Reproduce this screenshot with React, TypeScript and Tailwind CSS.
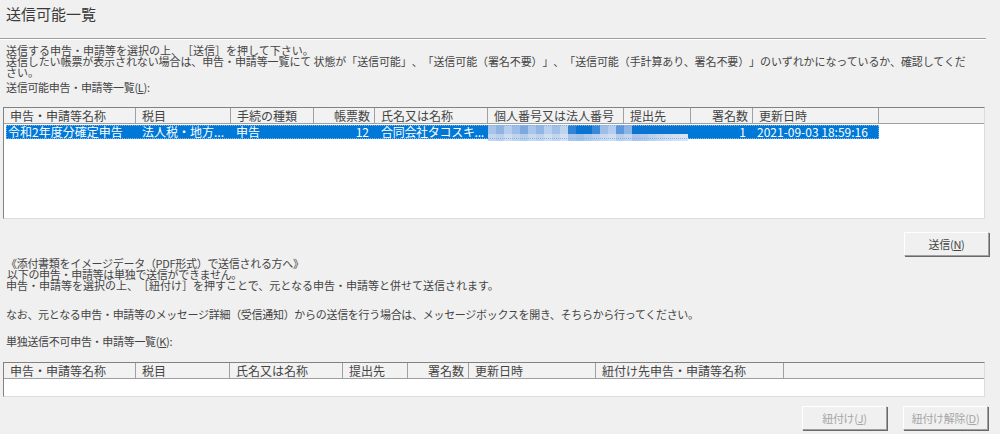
import React from 'react';

type Col = { label: string; w: string; right?: boolean };

const sendCols: Col[] = [
  { label: '申告・申請等名称', w: 'w-[132px]' },
  { label: '税目', w: 'w-[95px]' },
  { label: '手続の種類', w: 'w-[83px]' },
  { label: '帳票数', w: 'w-[61px]', right: true },
  { label: '氏名又は名称', w: 'w-[113px]' },
  { label: '個人番号又は法人番号', w: 'w-[136px]' },
  { label: '提出先', w: 'w-[67px]' },
  { label: '署名数', w: 'w-[62px]', right: true },
  { label: '更新日時', w: 'w-[126px]' },
];

const linkCols: Col[] = [
  { label: '申告・申請等名称', w: 'w-[132px]' },
  { label: '税目', w: 'w-[94px]' },
  { label: '氏名又は名称', w: 'w-[113px]' },
  { label: '提出先', w: 'w-[65px]' },
  { label: '署名数', w: 'w-[61px]', right: true },
  { label: '更新日時', w: 'w-[127px]' },
  { label: '紐付け先申告・申請等名称', w: 'w-[188px]' },
];

// pixelated (masked) number cells
const mosaic: [string, string][] = [
  ['bg-[#a7c3e7]', 'bg-[#c4d6ef]'],
  ['bg-[#8fb4e2]', 'bg-[#bcd0ec]'],
  ['bg-[#b5cdec]', 'bg-[#cddcf0]'],
  ['bg-[#9dbde6]', 'bg-[#c0d4ee]'],
  ['bg-[#7aa8df]', 'bg-[#b6cdec]'],
  ['bg-[#a9c5e9]', 'bg-[#c8d9ef]'],
  ['bg-[#92b6e3]', 'bg-[#bfd3ed]'],
  ['bg-[#b9cfed]', 'bg-[#d0def1]'],
  ['bg-[#a2c0e7]', 'bg-[#c3d6ee]'],
  ['bg-[#c0d4ee]', 'bg-[#d3e0f2]'],
  ['bg-[#2f84d8]', 'bg-[#a9c6ea]'],
  ['bg-[#0a74d2]', 'bg-[#a4c2e8]'],
  ['bg-[#0a74d2]', 'bg-[#b1caeb]'],
  ['bg-[#3a88d9]', 'bg-[#bcd1ed]'],
  ['bg-[#9fbee6]', 'bg-[#c9daf0]'],
  ['bg-[#b4cded]', 'bg-[#d0def1]'],
  ['bg-[#5c99dc]', 'bg-[#b8cfec]'],
  ['bg-[#8db5e4]', 'bg-[#c4d6ef]'],
  ['bg-[#0a74d2]', 'bg-[#aac5e9]'],
  ['bg-[#0a74d2]', 'bg-[#b3cbeb]'],
  ['bg-[#0a74d2]', 'bg-[#bdd2ed]'],
  ['bg-[#0a74d2]', 'bg-[#c6d8ef]'],
  ['bg-[#0a74d2]', 'bg-[#cddcf0]'],
  ['bg-[#0a74d2]', 'bg-[#d2e0f2]'],
  ['bg-[#0a74d2]', 'bg-[#d8e3f3]'],
];

function Header({ cols }: { cols: Col[] }) {
  return (
    <div className="flex h-[16px] shrink-0 bg-[#f2f2f2] border-b border-[#a0a0a0] text-[12px] leading-[15px] text-[#444]">
      {cols.map((c) => (
        <div
          key={c.label}
          className={`${c.w} shrink-0 border-r border-[#a0a0a0] overflow-hidden whitespace-nowrap ${c.right ? 'text-right pr-[4px]' : 'pl-[6px]'}`}
        >
          {c.label}
        </div>
      ))}
      <div className="flex-1" />
    </div>
  );
}

function Btn({ children, disabled }: { children: React.ReactNode; disabled?: boolean }) {
  return (
    <button
      className={`w-[85px] h-[24px] bg-[#f0f0f0] border border-t-white border-l-white border-r-[#a0a0a0] border-b-[#a0a0a0] shadow-[1px_1px_0_0_#696969] text-[11px] leading-[14px] tracking-[-0.3px] ${disabled ? 'text-[#a6a6a6]' : 'text-[#444]'}`}
    >
      {children}
    </button>
  );
}

export default function App() {
  return (
    <div className="w-[1000px] h-[434px] overflow-hidden bg-[#f0f0f0] text-[#444] text-[11px] [text-spacing-trim:space-all] font-['Noto_Sans_CJK_JP','Noto_Sans',sans-serif] flex flex-col">
      <div className="mt-[5px] ml-[6px] h-[18px] text-[15px] leading-[18px] text-[#3a3a3a]">送信可能一覧</div>
      <div className="mt-[15px] w-[986px] h-[2px] border-t border-t-[#a0a0a0] border-b border-b-white" />

      {/* instructions */}
      <div className="mt-[5px] ml-[6px] leading-[11px] whitespace-nowrap">
        <div>送信する申告・申請等を選択の上、［送信］を押して下さい。</div>
        <div className="tracking-[-0.1px]">送信したい帳票が表示されない場合は、申告・申請等一覧にて 状態が「送信可能」、「送信可能（署名不要）」、「送信可能（手計算あり、署名不要）」のいずれかになっているか、確認してくだ</div>
        <div>さい。</div>
      </div>
      <div className="mt-[3px] ml-[6px] leading-[12px] tracking-[-0.3px]">
        送信可能申告・申請等一覧(<span className="underline">L</span>):
      </div>

      {/* send list */}
      <div className="mt-[14px] ml-[3px] w-[982px] h-[112px] shrink-0 flex flex-col border border-t-[#828282] border-l-[#828282] border-r-[#dcdcdc] border-b-[#dcdcdc] bg-white">
        <Header cols={sendCols} />
        <div className="flex-1 pl-[2px] pt-[1px]">
          <div className="flex w-[873px] h-[14px] bg-[#0078d7] text-white text-[12px] leading-[14px] whitespace-nowrap outline outline-1 outline-dotted outline-[#7db6ec] outline-offset-[-1px]">
            <div className="w-[130px] shrink-0 pl-[2px]">令和2年度分確定申告</div>
            <div className="w-[95px] shrink-0 pl-[6px]">法人税・地方...</div>
            <div className="w-[83px] shrink-0 pl-[5px]">申告</div>
            <div className="w-[61px] shrink-0 pr-[6px] text-right">12</div>
            <div className="w-[113px] shrink-0 pl-[6px] tracking-[-0.3px]">合同会社タコスキ...</div>
            <div className="w-[199px] shrink-0 h-[16px] flex">
              {mosaic.map(([top, bottom], i) => (
                <div key={i} className="w-[8px] shrink-0 flex flex-col">
                  <div className={`h-[9px] ${top}`} />
                  <div className={`h-[7px] ${bottom}`} />
                </div>
              ))}
            </div>
            <div className="w-[4px] shrink-0" />
            <div className="w-[62px] shrink-0 pr-[7px] text-right">1</div>
            <div className="w-[126px] shrink-0 pl-[4px]">2021-09-03 18:59:16</div>
          </div>
        </div>
      </div>

      <div className="mt-[13px] flex justify-end pr-[11px]">
        <Btn>
          送信(<span className="underline">N</span>)
        </Btn>
      </div>

      {/* attachment notes */}
      <div className="mt-[2px] ml-[6px] leading-[11px] whitespace-nowrap">
        <div className="tracking-[-0.3px]">《添付書類をイメージデータ（PDF形式）で送信される方へ》</div>
        <div className="pl-[1px] tracking-[-0.3px]">以下の申告・申請等は単独で送信ができません。</div>
        <div>申告・申請等を選択の上、［紐付け］を押すことで、元となる申告・申請等と併せて送信されます。</div>
      </div>
      <div className="mt-[18px] ml-[6px] leading-[11px] tracking-[-0.3px] whitespace-nowrap">
        なお、元となる申告・申請等のメッセージ詳細（受信通知）からの送信を行う場合は、メッセージボックスを開き、そちらから行ってください。
      </div>
      <div className="mt-[16px] ml-[6px] leading-[11px] tracking-[-0.3px]">
        単独送信不可申告・申請等一覧(<span className="underline">K</span>):
      </div>

      {/* link list */}
      <div className="mt-[15px] ml-[3px] w-[982px] h-[35px] shrink-0 flex flex-col border border-t-[#828282] border-l-[#828282] border-r-[#dcdcdc] border-b-[#dcdcdc] bg-white">
        <Header cols={linkCols} />
        <div className="flex-1" />
      </div>

      <div className="mt-[9px] flex justify-end gap-[16px] pr-[12px]">
        <Btn disabled>
          紐付け(<span className="underline">J</span>)
        </Btn>
        <Btn disabled>
          紐付け解除(<span className="underline">D</span>)
        </Btn>
      </div>
    </div>
  );
}
